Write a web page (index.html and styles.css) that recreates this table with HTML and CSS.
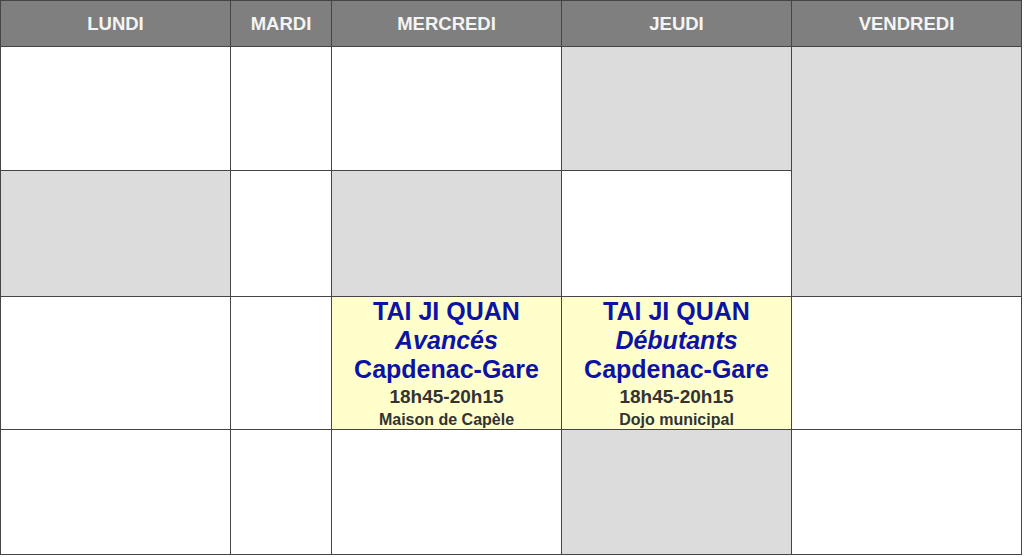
FILE: index.html
```html
<!DOCTYPE html>
<html lang="fr">
<head>
<meta charset="utf-8">
<title>Planning</title>
<link rel="stylesheet" href="styles.css">
</head>
<body>
<table class="planning">
  <colgroup>
    <col class="c-wide">
    <col class="c-narrow">
    <col class="c-wide">
    <col class="c-wide">
    <col class="c-last">
  </colgroup>
  <thead>
    <tr class="head">
      <th>LUNDI</th>
      <th>MARDI</th>
      <th>MERCREDI</th>
      <th>JEUDI</th>
      <th>VENDREDI</th>
    </tr>
  </thead>
  <tbody>
    <tr class="r1">
      <td></td>
      <td></td>
      <td></td>
      <td class="gray"></td>
      <td class="gray" rowspan="2"></td>
    </tr>
    <tr class="r2">
      <td class="gray"></td>
      <td></td>
      <td class="gray"></td>
      <td></td>
    </tr>
    <tr class="r3">
      <td></td>
      <td></td>
      <td class="course">
        <div class="title">TAI JI QUAN</div>
        <div class="level">Avancés</div>
        <div class="city">Capdenac-Gare</div>
        <div class="time">18h45-20h15</div>
        <div class="place">Maison de Capèle</div>
      </td>
      <td class="course">
        <div class="title">TAI JI QUAN</div>
        <div class="level">Débutants</div>
        <div class="city">Capdenac-Gare</div>
        <div class="time">18h45-20h15</div>
        <div class="place">Dojo municipal</div>
      </td>
      <td></td>
    </tr>
    <tr class="r4">
      <td></td>
      <td></td>
      <td></td>
      <td class="gray"></td>
      <td></td>
    </tr>
  </tbody>
</table>
</body>
</html>
```

FILE: styles.css
```css
html, body {
  margin: 0;
  padding: 0;
  background: #ffffff;
}

body {
  font-family: "Liberation Sans", Arial, sans-serif;
}

.planning {
  border-collapse: collapse;
  table-layout: fixed;
  width: 1021px;
}

.c-wide { width: 230px; }
.c-narrow { width: 101px; }
.c-last { width: 230px; }

.planning th,
.planning td {
  border: 1px solid #454545;
  padding: 0;
}

.head {
  height: 46px;
}

.head th {
  background: #7f7f7f;
  color: #f4f4f4;
  font-size: 18.5px;
  font-weight: bold;
  text-align: center;
  vertical-align: middle;
  padding-top: 1px;
}

.r1 { height: 124px; }
.r2 { height: 126px; }
.r3 { height: 133px; }
.r4 { height: 125px; }

.gray {
  background: #dcdcdc;
}

.course {
  background: #ffffcc;
  text-align: center;
  vertical-align: middle;
  font-weight: bold;
}

.title,
.level,
.city {
  color: #0c12a6;
  font-size: 25px;
  line-height: 29px;
}

.level {
  font-style: italic;
}

.time {
  color: #333333;
  font-size: 19px;
  line-height: 26px;
}

.place {
  color: #333333;
  font-size: 16px;
  line-height: 19px;
}
```
